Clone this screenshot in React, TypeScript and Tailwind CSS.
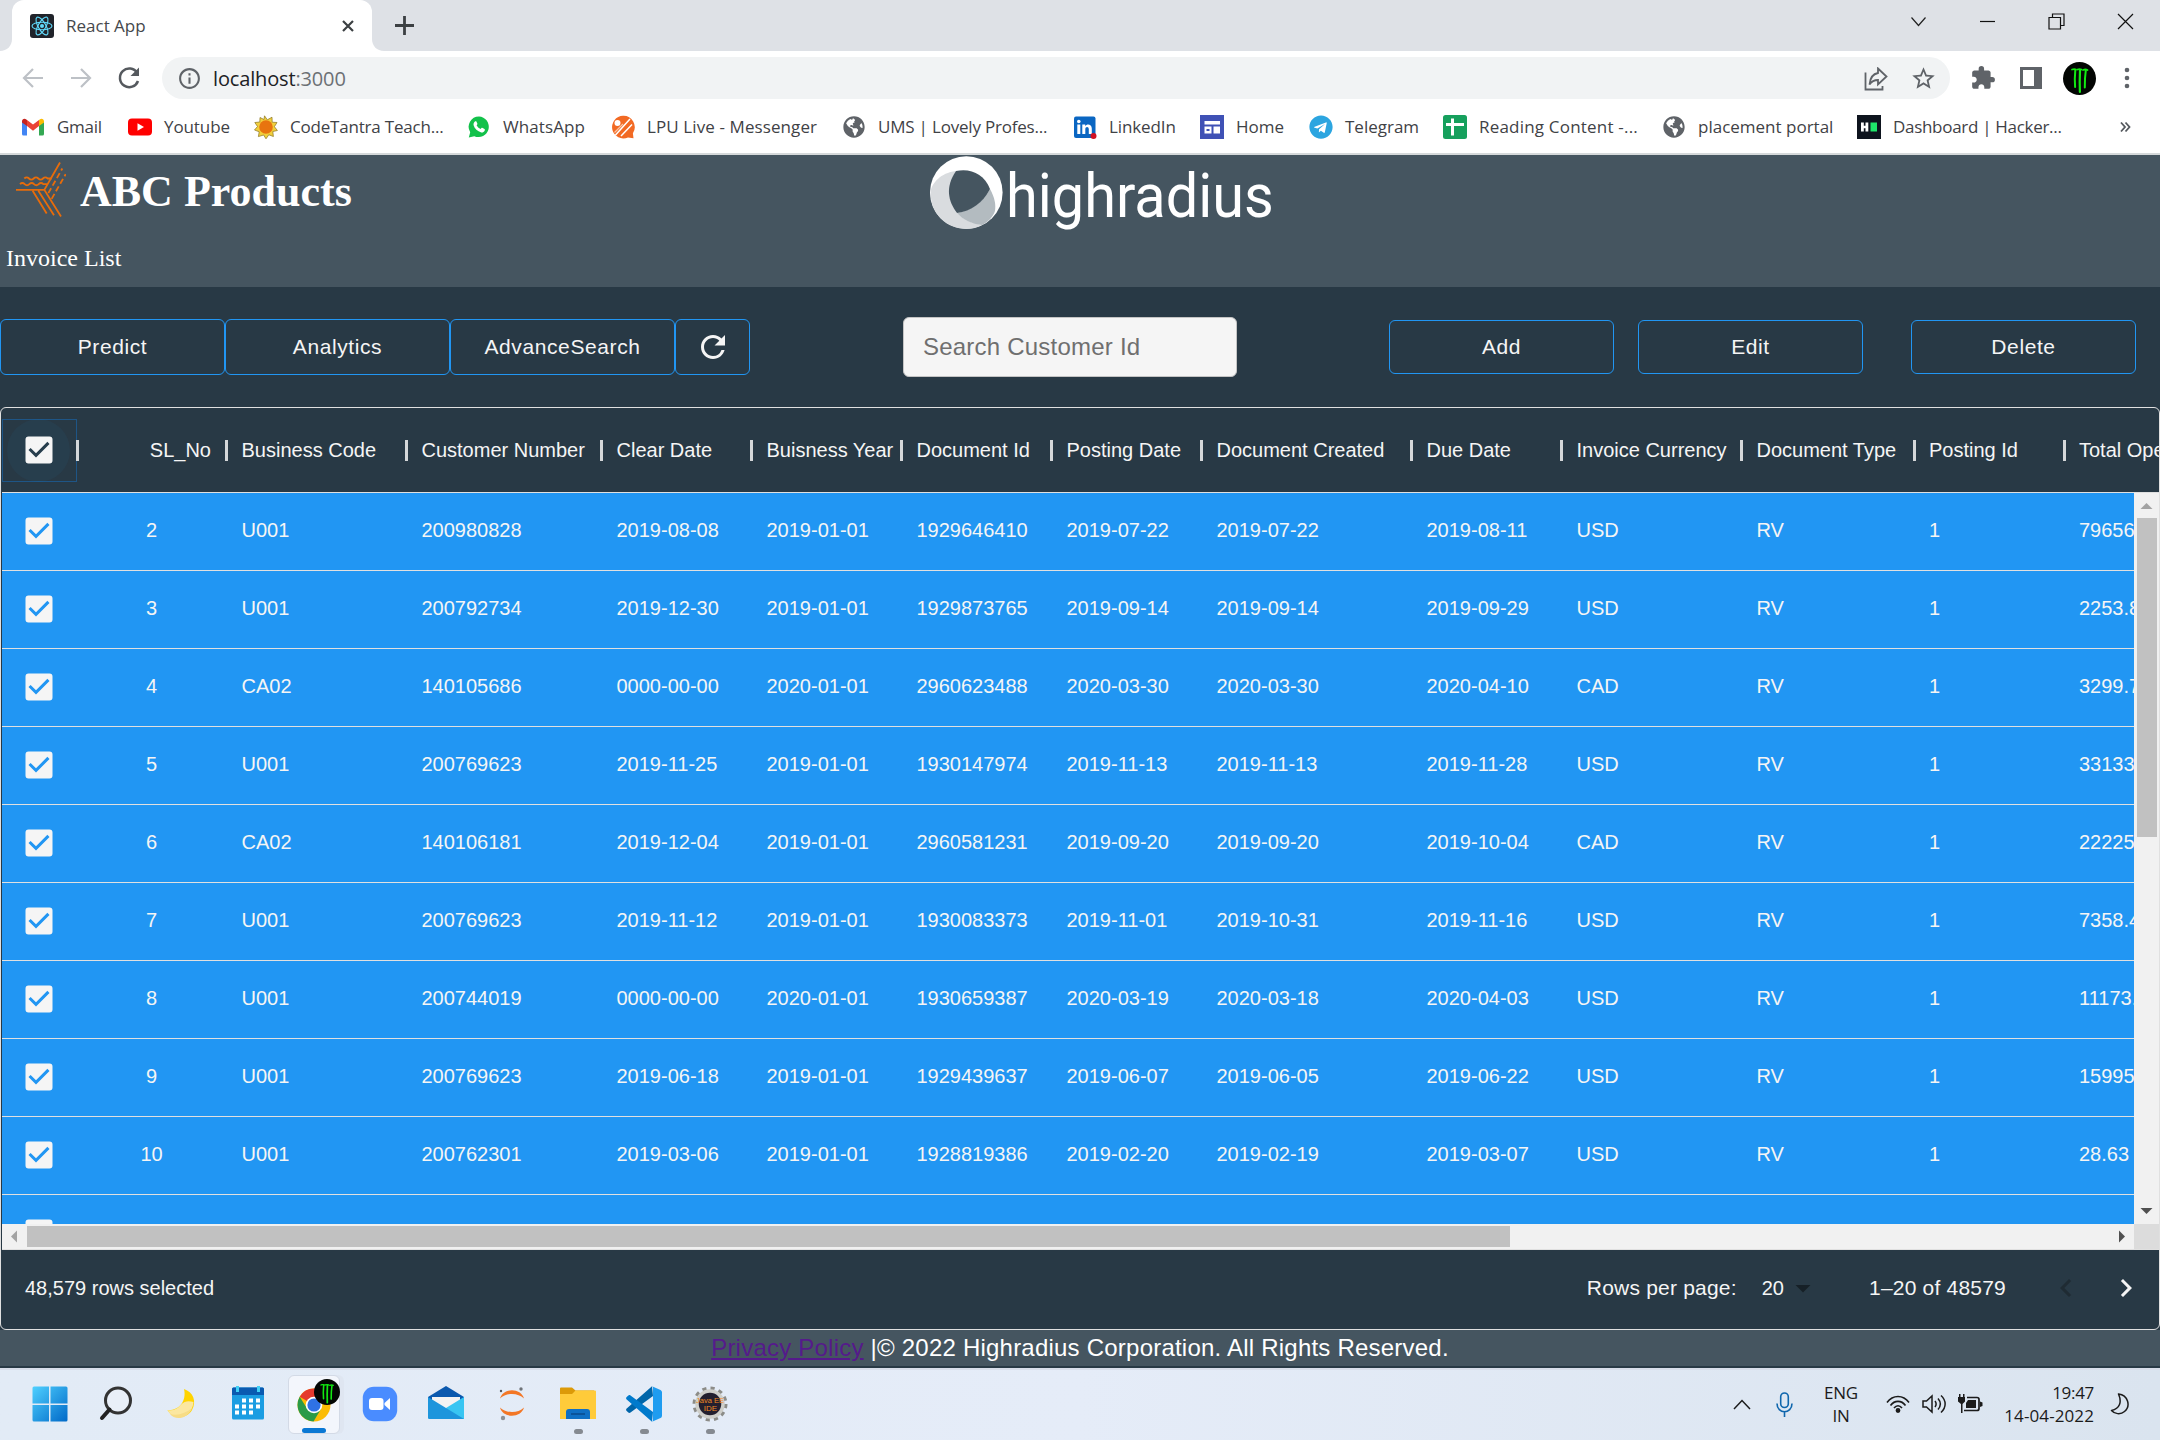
import React from "react";
import {
  MdRefresh,
  MdStarBorder,
  MdExtension,
  MdInfoOutline,
  MdKeyboardArrowLeft,
  MdKeyboardArrowRight,
  MdArrowDropDown,
  MdCheckBox,
} from "react-icons/md";
import { FaGlobeAmericas, FaTelegram } from "react-icons/fa";

const Monster = ({ size }: { size: number }) => (
  <svg width={size} height={size} viewBox="0 0 33 33">
    <circle cx="16.5" cy="16.5" r="16.5" fill="#030603" />
    <g fill="none" stroke="#12e812" strokeLinecap="round">
      <path d="M9 7.500q2.500-.8 4 0" strokeWidth="1.800" />
      <path d="M12.300 8l-.5 9 .3 8" strokeWidth="2" />
      <path d="M14.500 7.500q2-.8 4 0" strokeWidth="1.800" />
      <path d="M17 8l-.3 12 .2 10" strokeWidth="2.200" />
      <path d="M20 8q2.500-1 4.500 0" strokeWidth="1.800" />
      <path d="M22.800 8.500l-.8 8-.2 9" strokeWidth="2" />
    </g>
  </svg>
);

const Gmail = () => (
  <svg width="24" height="24" viewBox="0 0 24 24">
    <path d="M1 6v13a1.500 1.500 0 0 0 1.500 1.500H6V10z" fill="#4285f4" />
    <path d="M23 6v13a1.500 1.500 0 0 1-1.500 1.500H18V10z" fill="#34a853" />
    <path d="M6 10V5l6 4.600L18 5v6l-6 4.800L6 11z" fill="#ea4335" />
    <path d="M1 6.500C1 4 3.500 3 5.300 4.500L6 5v6L1 7.500z" fill="#c5221f" />
    <path d="M23 6.500c0-2.500-2.500-3.500-4.300-2L18 5v6l5-3.500z" fill="#fbbc04" />
  </svg>
);
const Youtube = () => (
  <svg width="24" height="24" viewBox="0 0 24 24">
    <rect y="3.500" width="24" height="17" rx="4" fill="#f00" />
    <path d="M9.500 8.300v7.400l6.500-3.700z" fill="#fff" />
  </svg>
);
const Sun = () => (
  <svg width="24" height="24" viewBox="0 0 24 24">
    <path
      d="M10.500 .8l2.800 4 4.700-2.600.2 5 4.800.3-2.600 4.200 3 3.800-4.600 1 .6 5-4.600-1.700-2.800 4-2.400-3.800-5.200 1.600.8-4.800-4.700-1.800 3-3.500L.8 7.500l5-.5.2-4.500 4 2z"
      fill="#f2cf3c"
      stroke="#8a7420"
      strokeWidth=".7"
    />
    <circle cx="12" cy="12" r="6.800" fill="#e8740f" />
  </svg>
);
const WhatsApp = () => (
  <svg width="24" height="24" viewBox="0 0 24 24">
    <path d="M12 1.500A10.300 10.300 0 0 0 3.200 17.200L1.800 22.600l5.500-1.400A10.300 10.300 0 1 0 12 1.500z" fill="#12c14a" />
    <path
      d="M8.200 6.300c.4-.3 1-.2 1.200.2l1 2.200c.1.300 0 .6-.8 1.600.7 1.500 2.200 3 4 3.700.9-1.100 1.200-1.400 1.600-1.200l2.300 1.100c.5.300.4 1.200 0 2-.5 1-2 1.800-3.200 1.500C10.500 16.500 7.600 13.700 6.600 10.300c-.4-1.500.4-3.200 1.600-4z"
      fill="#fff"
    />
  </svg>
);
const Lpu = () => (
  <svg width="24" height="24" viewBox="0 0 24 24">
    <path d="M12 .8A11.300 11.300 0 1 0 17 22.400l5.500.8-.6-5A11.300 11.300 0 0 0 12 .8z" fill="#f26a24" />
    <path d="M4.500 20L19 4M10 21L21 9.500" stroke="#fff" strokeWidth="1.500" />
    <path d="M3.500 17.500L12 9" stroke="#fbc3a3" strokeWidth="1.200" />
    <circle cx="6.500" cy="8" r="3" fill="#fff" />
  </svg>
);
const Globe = () => <FaGlobeAmericas size={22} color="#5f6368" />;
const LinkedIn = () => (
  <svg width="24" height="24" viewBox="0 0 24 24">
    <rect x="1" y="1.500" width="21.500" height="21.500" rx="2" fill="#0a66c2" />
    <path d="M4.300 9.500h3V19h-3zM9.300 9.500h2.900v1.400c1.400-2.300 6.600-2.400 6.600 2.600V19h-3v-4.800c0-3-3.500-2.800-3.500 0V19h-3z" fill="#fff" />
    <circle cx="5.800" cy="6.500" r="1.800" fill="#fff" />
    <circle cx="20.500" cy="21" r="3" fill="#d11124" />
  </svg>
);
const Home = () => (
  <svg width="24" height="24" viewBox="0 0 24 24">
    <path d="M0 0h24v24H0z" fill="#3f51b5" />
    <path d="M4.500 6h15.500v3.500H4.500zM4.500 11.500h7v7h-7zM13.500 11.500H20v7h-6.500z" fill="#fff" />
    <path d="M6.500 14h3v2h-3z" fill="#3f51b5" />
  </svg>
);
const Telegram = () => <FaTelegram size={24} color="#2ca5e0" />;
const Sheets = () => (
  <svg width="24" height="24" viewBox="0 0 24 24">
    <rect width="24" height="24" rx="2.500" fill="#16a05d" />
    <path d="M8 3.500h3v17H8zM3 8h18v3H3z" fill="#fff" />
  </svg>
);
const Hacker = () => (
  <svg width="24" height="24" viewBox="0 0 24 24">
    <path d="M0 0h24v24H0z" fill="#0e141e" />
    <path d="M4 7.500h2.800v3.200h1.700V7.500h2.800v9H8.500v-3.200H6.800v3.200H4z" fill="#fff" />
    <path d="M13.500 7.500h6.500v9h-6.500z" fill="#1ee66a" />
  </svg>
);

const bookmarks: { label: string; Icon: () => React.ReactElement; box: string }[] = [
  { label: "Gmail", Icon: Gmail, box: "w-[107px] tracking-[-0.3px]" },
  { label: "Youtube", Icon: Youtube, box: "w-[126px] tracking-[-0.1px]" },
  { label: "CodeTantra Teach...", Icon: Sun, box: "w-[213px] tracking-[-0.2px]" },
  { label: "WhatsApp", Icon: WhatsApp, box: "w-[144px] tracking-[0.1px]" },
  { label: "LPU Live - Messenger", Icon: Lpu, box: "w-[231px] tracking-[0.1px]" },
  { label: "UMS | Lovely Profes...", Icon: Globe, box: "w-[231px] tracking-[-0.2px]" },
  { label: "LinkedIn", Icon: LinkedIn, box: "w-[127px] tracking-[-0.1px]" },
  { label: "Home", Icon: Home, box: "w-[109px]" },
  { label: "Telegram", Icon: Telegram, box: "w-[134px]" },
  { label: "Reading Content -...", Icon: Sheets, box: "w-[219px] tracking-[0.2px]" },
  { label: "placement portal", Icon: Globe, box: "w-[195px]" },
  { label: "Dashboard | Hacker...", Icon: Hacker, box: "w-[263px] tracking-[-0.3px]" },
];

function TabStrip() {
  return (
    <div className="flex h-[51px] shrink-0 items-start bg-[#dee1e6]">
      <svg width="12" height="51" viewBox="0 0 12 51">
        <path d="M12 39v12H0c7 0 12-5 12-12z" fill="#fff" />
      </svg>
      <div className="flex h-[51px] w-[360px] items-center rounded-t-xl bg-white pl-[18px]">
        <svg width="24" height="24" viewBox="0 0 24 24">
          <rect width="24" height="24" rx="3" fill="#20232a" />
          <g fill="none" stroke="#61dafb" strokeWidth="1.100">
            <ellipse cx="12" cy="12" rx="10" ry="3.800" />
            <ellipse cx="12" cy="12" rx="10" ry="3.800" transform="rotate(60 12 12)" />
            <ellipse cx="12" cy="12" rx="10" ry="3.800" transform="rotate(120 12 12)" />
          </g>
          <circle cx="12" cy="12" r="2" fill="#61dafb" />
        </svg>
        <span className="ml-[12px] text-[17px] text-[#45484c]">React App</span>
        <svg className="ml-auto mr-[18px]" width="12" height="12" viewBox="0 0 12 12">
          <path d="M1 1l10 10M11 1L1 11" stroke="#3c4043" strokeWidth="2.200" />
        </svg>
      </div>
      <svg width="12" height="51" viewBox="0 0 12 51">
        <path d="M0 39v12h12C5 51 0 46 0 39z" fill="#fff" />
      </svg>
      <svg className="ml-[11px] mt-[16px]" width="19" height="19" viewBox="0 0 19 19">
        <path d="M9.500 0v19M0 9.500h19" stroke="#3c4043" strokeWidth="2.800" />
      </svg>
      <div className="ml-auto mr-[26px] mt-[13px] flex items-center gap-[52px]">
        <svg width="17" height="17" viewBox="0 0 17 17">
          <path d="M1.500 4.500l7 8 7-8" fill="none" stroke="#222" strokeWidth="1.200" />
        </svg>
        <svg width="17" height="17" viewBox="0 0 17 17">
          <path d="M1 8.500h15" stroke="#111" strokeWidth="1.200" />
        </svg>
        <svg width="17" height="17" viewBox="0 0 17 17">
          <path d="M1 4.500h11.500V16H1zM4.500 4.500V1H16v11.500h-3.500" fill="none" stroke="#111" strokeWidth="1.200" />
        </svg>
        <svg width="17" height="17" viewBox="0 0 17 17">
          <path d="M1 1l15 15M16 1L1 16" stroke="#111" strokeWidth="1.200" />
        </svg>
      </div>
    </div>
  );
}

function Toolbar() {
  return (
    <div className="flex h-[54px] shrink-0 items-center bg-white pl-[22px] pr-[22px]">
      <svg width="22" height="22" viewBox="0 0 22 22">
        <path d="M21 11H2.500M11 2L2 11l9 9" fill="none" stroke="#bdc1c6" strokeWidth="2.200" />
      </svg>
      <svg className="ml-[26px]" width="22" height="22" viewBox="0 0 22 22">
        <path d="M1 11h18.500M11 2l9 9-9 9" fill="none" stroke="#bdc1c6" strokeWidth="2.200" />
      </svg>
      <svg className="ml-[25px]" width="24" height="24" viewBox="0 0 24 24">
        <path d="M20.200 7A9.300 9.300 0 1 0 21 15" fill="none" stroke="#55595e" strokeWidth="2.500" />
        <path d="M22 1.500V10h-8.500z" fill="#55595e" />
      </svg>
      <div className="ml-[21px] flex h-[42px] w-[1788px] items-center rounded-full bg-[#f1f3f4] pl-[15px] pr-[13px]">
        <MdInfoOutline size={25} color="#5f6368" />
        <span className="ml-[11px] mt-[2px] text-[20px] tracking-[-0.15px] text-[#202124]">
          localhost<span className="text-[#6c7075]">:3000</span>
        </span>
        <svg className="ml-auto mt-[1px]" width="24" height="24" viewBox="0 0 24 24" fill="none" stroke="#5f6368" strokeWidth="1.800">
          <path d="M1.500 5.500v17h17v-3.500" />
          <path d="M14 1.500l8.500 8-8.500 8v-4.500c-4 0-6.500 1.500-8.500 4.500.5-6 3-10.500 8.500-11.500z" />
        </svg>
        <MdStarBorder className="ml-[22px]" size={27} color="#5f6368" />
      </div>
      <MdExtension className="ml-[20px]" size={26} color="#5f6368" />
      <svg className="ml-[24px]" width="22" height="22" viewBox="0 0 22 22">
        <path d="M0 0h22v22H0zM3 3v16h11V3z" fill="#5f6368" fillRule="evenodd" />
      </svg>
      <div className="ml-[21px]">
        <Monster size={33} />
      </div>
      <svg className="ml-[28px]" width="6" height="22" viewBox="0 0 6 22" fill="#5f6368">
        <circle cx="3" cy="3" r="2.300" />
        <circle cx="3" cy="11" r="2.300" />
        <circle cx="3" cy="19" r="2.300" />
      </svg>
    </div>
  );
}

function BookmarksBar() {
  return (
    <div className="flex h-[50px] shrink-0 items-center border-b-2 border-[#d5d9da] bg-white pb-[5px] pl-[21px] text-[17px] leading-6 text-[#3f4246]">
      {bookmarks.map(({ label, Icon, box }) => (
        <div key={label} className={`flex shrink-0 items-center whitespace-nowrap ${box}`}>
          <span className="mr-[12px] flex w-[24px] shrink-0 justify-center">
            <Icon />
          </span>
          {label}
        </div>
      ))}
      <svg width="11" height="12" viewBox="0 0 11 12" fill="none" stroke="#55595e" strokeWidth="1.800">
        <path d="M1 1.500L5 6l-4 4.500M5.500 1.500l4 4.500-4 4.500" />
      </svg>
    </div>
  );
}

function AppHeader() {
  return (
    <header className="flex h-[132px] shrink-0 bg-[#455560] text-white">
      <div className="w-[930px]">
        <div className="flex h-[74px] items-center pl-[16px]">
          <svg className="-mt-[6px]" width="50" height="55" viewBox="48 184 150 164" fill="none" stroke="#e86c0a" strokeWidth="5.500">
            <path d="M48 267h85l50 80M133 267l47-82M115 270l47 73M98 270l42 68" />
            <path d="M60 250q7-7 14 0t14 0 14 0 14 0 14 0h12M73 233q7-7 14 0t14 0 14 0 14 0 14 0h12" />
            <path d="M145 277l42-74M155 294l42-74" strokeDasharray="17 9" />
          </svg>
          <span className="ml-[14px] font-['Liberation_Serif',serif] text-[44px] font-bold leading-[50px]">ABC Products</span>
        </div>
        <div className="mt-[15px] pl-[6px] font-['Liberation_Serif',serif] text-[24px] leading-7">Invoice List</div>
      </div>
      <svg width="73" height="75" viewBox="0 0 73 75">
        <circle cx="36.300" cy="37.500" r="36.300" fill="#fff" />
        <path d="M26 16C10 18 3 28 .8 35C-1 58 16 74 36.500 74c6 0 11-1.500 15.500-4-10-2-19-5-25-12-6-8-10-24-1-42z" fill="#d9dcdf" />
        <path d="M60 34c5 9 6 16 5 22-2 6-7 11-13 14-10-1-19-5-25-12 14-3 26-10 33-24z" fill="#b3bbc0" />
        <path d="M26 16c15-3 28 3 34 18-7 14-19 22-33 24-9-12-12-26-1-42z" fill="#455560" />
      </svg>
      <span className="ml-[3px] mt-[5px] inline-block h-[72px] origin-left scale-x-[0.93] font-['Roboto',sans-serif] text-[62px] font-normal leading-[72px]">
        highradius
      </span>
    </header>
  );
}

const btn = "flex items-center justify-center border border-[#2196f3] rounded-md text-[21px] tracking-[0.6px] text-[#f5f5f5]";

function Actions() {
  return (
    <div className="flex h-[120px] shrink-0 items-center font-['Liberation_Sans',Arial,sans-serif]">
      <button className={`${btn} h-[56px] w-[225px]`}>Predict</button>
      <button className={`${btn} h-[56px] w-[225px]`}>Analytics</button>
      <button className={`${btn} h-[56px] w-[225px]`}>AdvanceSearch</button>
      <button className={`${btn} h-[56px] w-[75px]`}>
        <MdRefresh size={36} />
      </button>
      <div className="ml-[153px] flex h-[60px] w-[334px] items-center rounded-md border border-[#c4c4c4] bg-[#f5f5f5] pl-[19px] text-[24px] tracking-[0.22px] text-[#6f6f6f]">
        Search Customer Id
      </div>
      <button className={`${btn} ml-[152px] h-[54px] w-[225px]`}>Add</button>
      <button className={`${btn} ml-[24px] h-[54px] w-[225px]`}>Edit</button>
      <button className={`${btn} ml-[48px] h-[54px] w-[225px]`}>Delete</button>
    </div>
  );
}

const columns: { title: string; width: string }[] = [
  { title: "SL_No", width: "w-[150px]" },
  { title: "Business Code", width: "w-[180px]" },
  { title: "Customer Number", width: "w-[195px]" },
  { title: "Clear Date", width: "w-[150px]" },
  { title: "Buisness Year", width: "w-[150px]" },
  { title: "Document Id", width: "w-[150px]" },
  { title: "Posting Date", width: "w-[150px]" },
  { title: "Document Created", width: "w-[210px]" },
  { title: "Due Date", width: "w-[150px]" },
  { title: "Invoice Currency", width: "w-[180px]" },
  { title: "Document Type", width: "w-[172.5px]" },
  { title: "Posting Id", width: "w-[150px]" },
  { title: "Total Open Amount", width: "w-[200px]" },
];

const rows: string[][] = [
  ["2", "U001", "200980828", "2019-08-08", "2019-01-01", "1929646410", "2019-07-22", "2019-07-22", "2019-08-11", "USD", "RV", "1", "79656.6"],
  ["3", "U001", "200792734", "2019-12-30", "2019-01-01", "1929873765", "2019-09-14", "2019-09-14", "2019-09-29", "USD", "RV", "1", "2253.86"],
  ["4", "CA02", "140105686", "0000-00-00", "2020-01-01", "2960623488", "2020-03-30", "2020-03-30", "2020-04-10", "CAD", "RV", "1", "3299.7"],
  ["5", "U001", "200769623", "2019-11-25", "2019-01-01", "1930147974", "2019-11-13", "2019-11-13", "2019-11-28", "USD", "RV", "1", "33133.29"],
  ["6", "CA02", "140106181", "2019-12-04", "2019-01-01", "2960581231", "2019-09-20", "2019-09-20", "2019-10-04", "CAD", "RV", "1", "22225.84"],
  ["7", "U001", "200769623", "2019-11-12", "2019-01-01", "1930083373", "2019-11-01", "2019-10-31", "2019-11-16", "USD", "RV", "1", "7358.49"],
  ["8", "U001", "200744019", "0000-00-00", "2020-01-01", "1930659387", "2020-03-19", "2020-03-18", "2020-04-03", "USD", "RV", "1", "11173.02"],
  ["9", "U001", "200769623", "2019-06-18", "2019-01-01", "1929439637", "2019-06-07", "2019-06-05", "2019-06-22", "USD", "RV", "1", "15995.04"],
  ["10", "U001", "200762301", "2019-03-06", "2019-01-01", "1928819386", "2019-02-20", "2019-02-19", "2019-03-07", "USD", "RV", "1", "28.63"],
  ["", "", "", "", "", "", "", "", "", "", "", "", ""],
];

function Grid() {
  return (
    <div className="flex h-[923px] shrink-0 flex-col overflow-hidden rounded-md border border-[#e0e0e0] font-['Liberation_Sans',Arial,sans-serif] text-[20px] text-[#f5f5f5]">
      <div className="ml-px flex h-[85px] shrink-0 items-center overflow-hidden border-b border-[#e0e0e0]">
        <div className="flex h-[63px] w-[75px] shrink-0 items-center justify-center border border-[#1e5586] pr-[2px]">
          <div className="flex size-[63px] shrink-0 items-center justify-center rounded-full bg-[#2196f3]/5">
            <MdCheckBox size={36} />
          </div>
        </div>
        <div className="-ml-[1.5px] -mr-[1.5px] h-[21px] w-[3px] shrink-0 bg-[#d4d7d9]" />
        {columns.map((c, i) => (
          <div key={c.title} className={`flex shrink-0 items-center whitespace-nowrap pl-[14.5px] ${c.width}`}>
            <span className={i === 0 ? "-mt-[1px] ml-auto mr-[14px]" : "-mt-[1px] mr-auto"}>{c.title}</span>
            <div className="-mr-[1px] h-[21px] w-[3px] shrink-0 bg-[#d4d7d9]" />
          </div>
        ))}
      </div>
      <div className="ml-px flex h-[731px] shrink-0">
        <div className="w-[2132px] shrink-0 overflow-hidden bg-[#2196f3]">
          {rows.map((r, i) => (
            <div key={i} className="flex h-[78px] w-[2400px] items-center border-b border-[#e0e0e0]">
              <div className="-mt-[1px] flex w-[75px] shrink-0 justify-center pr-[2px]">
                <MdCheckBox size={36} />
              </div>
              {r.map((v, j) => (
                <div
                  key={j}
                  className={`-mt-[4px] shrink-0 whitespace-nowrap ${columns[j].width} ${j === 0 ? "pr-px text-center" : "pl-[14.5px]"}`}
                >
                  {v}
                </div>
              ))}
            </div>
          ))}
        </div>
        <div className="flex w-[25px] flex-col items-center bg-[#f1f1f1]">
          <svg className="shrink-0" width="25" height="25" viewBox="0 0 25 25">
            <path d="M6.500 16l6-6 6 6z" fill="#a3a3a3" />
          </svg>
          <div className="h-[319px] w-[20px] bg-[#c1c1c1]" />
          <svg className="mt-auto shrink-0" width="25" height="25" viewBox="0 0 25 25">
            <path d="M6.500 9l6 6 6-6z" fill="#505050" />
          </svg>
        </div>
      </div>
      <div className="ml-px flex h-[26px] shrink-0 items-center border-b border-[#e0e0e0] bg-[#f1f1f1]">
        <svg width="25" height="25" viewBox="0 0 25 25">
          <path d="M15 6.500l-6 6 6 6z" fill="#a3a3a3" />
        </svg>
        <div className="h-[21px] w-[1483px] bg-[#c1c1c1]" />
        <svg className="ml-auto" width="25" height="25" viewBox="0 0 25 25">
          <path d="M10 6.500l6 6-6 6z" fill="#505050" />
        </svg>
        <div className="h-full w-[25px] bg-[#dcdcdc]" />
      </div>
      <div className="flex flex-1 items-center pb-[3px] pl-[24px]">
        <span>48,579 rows selected</span>
        <div className="ml-auto flex items-center text-[21px] tracking-[0.2px]">
          <span>Rows per page:</span>
          <span className="ml-[25px] text-[20px] tracking-normal">20</span>
          <MdArrowDropDown className="ml-px" size={36} color="#162027" />
          <span className="ml-[48px] w-[138px] whitespace-nowrap">1–20 of 48579</span>
          <MdKeyboardArrowLeft className="ml-[41px]" size={36} color="#1f2b33" />
          <MdKeyboardArrowRight className="ml-[24px] mr-[15px]" size={36} />
        </div>
      </div>
    </div>
  );
}

function SiteFooter() {
  return (
    <div className="flex h-[38px] shrink-0 justify-center border-b-2 border-[#283945] bg-[#455560] font-['Liberation_Sans',Arial,sans-serif] text-[24px] leading-[35px] tracking-[0.22px] text-white">
      <p className="whitespace-pre">
        <a className="text-[#551a8b] underline">Privacy Policy</a> |© 2022 Highradius Corporation. All Rights Reserved.
      </p>
    </div>
  );
}

const appIcons: { name: string; running?: boolean; active?: boolean; art: React.ReactElement }[] = [
  {
    name: "start",
    art: (
      <svg width="36" height="36" viewBox="0 0 36 36">
        <defs>
          <linearGradient id="win" x1="0" y1="0" x2="1" y2="1">
            <stop offset="0" stopColor="#4fd0ff" />
            <stop offset="1" stopColor="#0069c8" />
          </linearGradient>
        </defs>
        <path d="M2 .5h15v17H.5V2A1.500 1.500 0 0 1 2 .5zM18.500.5H34A1.500 1.500 0 0 1 35.500 2v15.500h-17zM.5 19H17v16.500H2A1.500 1.500 0 0 1 .5 34zM18.500 19h17v15a1.500 1.500 0 0 1-1.500 1.500H18.500z" fill="url(#win)" />
      </svg>
    ),
  },
  {
    name: "search",
    art: (
      <svg width="36" height="36" viewBox="0 0 36 36">
        <circle cx="20" cy="14.500" r="12.500" fill="#e9eff8" stroke="#333" strokeWidth="3" />
        <path d="M11.500 23.500L4 32" stroke="#222" strokeWidth="4" strokeLinecap="round" />
      </svg>
    ),
  },
  {
    name: "weather",
    art: (
      <svg width="36" height="36" viewBox="0 0 36 36">
        <path d="M20 3c9 3 13 12 8 21C23 33 9 34 3.500 24 14 25 23 16 20 3z" fill="#ffd400" />
        <path d="M3.500 24c6 1 10-1 13-5 5-5 9-4 13-3-1 15-19 21-26 8z" fill="#fbe7a0" />
        <path d="M6 28c8 2 16-1 22-6-4 11-17 13-22 6z" fill="#f7dc86" />
      </svg>
    ),
  },
  {
    name: "calendar",
    art: (
      <svg width="36" height="36" viewBox="0 0 36 36">
        <rect x="2" y="1.500" width="32" height="32" rx="1.500" fill="#1b9de2" />
        <path d="M2 3a1.500 1.500 0 0 1 1.500-1.500h29A1.500 1.500 0 0 1 34 3v6H2z" fill="#0a5ab0" />
        <path d="M6 0h3v6H6zM27 0h3v6h-3z" fill="#3fd0f6" />
        <path d="M12 12.500h4v4h-4zM19 12.500h4v4h-4zM26 12.500h4v4h-4zM5 18.500h4v4H5zM12 18.500h4v4h-4zM19 18.500h4v4h-4zM26 18.500h4v4h-4zM5 24.500h4v4H5zM12 24.500h4v4h-4zM19 24.500h4v4h-4z" fill="#fff" />
      </svg>
    ),
  },
  {
    name: "chrome",
    active: true,
    art: (
      <div className="relative">
        <svg width="34" height="34" viewBox="0 0 34 34">
          <circle cx="17" cy="17" r="16.500" fill="#fbbc05" />
          <path d="M17 17L2.700 8.800A16.500 16.500 0 0 1 31.300 8.800H17z" fill="#e53a2e" />
          <path d="M17 17l7 4-7.500 12.500A16.500 16.500 0 0 1 2.700 8.800l7.500 12z" fill="#2a9a48" />
          <circle cx="17" cy="17" r="8.300" fill="#fff" />
          <circle cx="17" cy="17" r="6.600" fill="#2f72e4" />
        </svg>
        <div className="absolute -top-[9px] left-[17px]">
          <Monster size={26} />
        </div>
      </div>
    ),
  },
  {
    name: "zoom",
    art: (
      <svg width="36" height="36" viewBox="0 0 36 36">
        <rect x=".8" y=".8" width="34.400" height="34.400" rx="11" fill="#4a8cff" />
        <rect x="7" y="12" width="14.500" height="12" rx="3" fill="#fff" />
        <path d="M22.500 17l5.500-5v12l-5.500-5z" fill="#fff" />
      </svg>
    ),
  },
  {
    name: "mail",
    art: (
      <svg width="36" height="36" viewBox="0 0 36 36">
        <path d="M0 11L18 0l18 11v3H0z" fill="#0b59ae" />
        <path d="M4 11h28v4L18 23 4 15z" fill="#f3f3f3" />
        <path d="M36 11v22H0l18-11z" fill="#38c5f2" />
        <path d="M0 11l36 22H1.500A1.500 1.500 0 0 1 0 31.500z" fill="#1d95dc" />
      </svg>
    ),
  },
  {
    name: "jupyter",
    art: (
      <svg width="36" height="36" viewBox="0 0 36 36">
        <path d="M6 12.500C9 1.500 27 1.500 30 12.500 24 6.500 12 6.500 6 12.500zM6 21.500c3 11 21 11 24 0-6 6-18 6-24 0z" fill="#f37726" />
        <circle cx="27" cy="3" r="1.700" fill="#6f7378" />
        <circle cx="7" cy="5" r="1.200" fill="#55585c" />
        <circle cx="9" cy="32" r="2.200" fill="#8d9196" />
      </svg>
    ),
  },
  {
    name: "explorer",
    running: true,
    art: (
      <svg width="36" height="36" viewBox="0 0 36 36">
        <path d="M0 2.500A1 1 0 0 1 1 1.500h11l3.500 3H34V12H0z" fill="#dc9a08" />
        <path d="M0 8h12l3.500-3.500H35a1 1 0 0 1 1 1V33H0z" fill="#ffcb3a" />
        <path d="M6 33v-7a3 3 0 0 1 3-3h18a3 3 0 0 1 3 3v7z" fill="#0f6fc4" />
        <path d="M11 28h14" stroke="#0a4a8c" strokeWidth="1.500" />
      </svg>
    ),
  },
  {
    name: "vscode",
    running: true,
    art: (
      <svg width="36" height="36" viewBox="0 0 36 36">
        <path d="M27 10L4.500 26.500c-.8.6-1.500.5-2.200-.1L.7 25c-.8-.8-.8-1.700 0-2.500L26 .3z" fill="#0065a9" />
        <path d="M27 26L4.500 9.500c-.8-.6-1.500-.5-2.200.1L.7 11c-.8.8-.8 1.700 0 2.500L26 35.700z" fill="#007acc" />
        <path d="M26 .3L34.500 4A2.500 2.500 0 0 1 36 6.300v23.400a2.500 2.500 0 0 1-1.500 2.300L26 35.700c.7-.3 1-.9 1-1.700V2c0-.8-.3-1.400-1-1.700z" fill="#1f9cf0" />
      </svg>
    ),
  },
  {
    name: "eclipse",
    running: true,
    art: (
      <svg width="36" height="36" viewBox="0 0 36 36">
        <circle cx="18" cy="18" r="15.500" fill="none" stroke="#8c8c88" strokeWidth="4" strokeDasharray="4.060 4.060" />
        <circle cx="18" cy="18" r="13" fill="#231f2e" stroke="#cfcfca" strokeWidth="3.500" />
        <g fill="#f08a24" fontFamily="Liberation Sans, sans-serif" fontSize="8" textAnchor="middle">
          <text x="18" y="16.500" textLength="28" lengthAdjust="spacingAndGlyphs">
            Java EE
          </text>
          <text x="18.500" y="24.500">IDE</text>
        </g>
      </svg>
    ),
  },
];

function Taskbar() {
  return (
    <div className="flex h-[72px] shrink-0 items-center border-t-2 border-[#d8deea] bg-linear-to-r from-[#e2ebf6] via-[#e5ecf8] to-[#dae4ef] pl-[17px] pr-[31px] text-[17px] text-[#1b1b1b]">
      {appIcons.map((a) => (
        <div key={a.name} className="flex h-[60px] w-[66px] shrink-0 justify-center">
          <div
            className={`flex flex-col items-center pt-[11px] ${
              a.active ? "h-[59px] w-[52px] rounded-md border border-[#d3dae6] bg-[#f3f6fc] shadow-[4px_0_0_0_#dfe6f1]" : ""
            }`}
          >
            <div className="flex h-[36px] items-center">{a.art}</div>
            {a.active && <div className="mt-[6px] h-[5px] w-[24px] shrink-0 rounded-full bg-[#0a78d4]" />}
            {a.running && <div className="mt-[7px] h-[5px] w-[9px] shrink-0 rounded-full bg-[#858a91]" />}
          </div>
        </div>
      ))}
      <div className="-mt-[2px] ml-auto flex items-center">
        <svg width="18" height="11" viewBox="0 0 18 11">
          <path d="M1 10l8-8.500 8 8.500" fill="none" stroke="#1b1b1b" strokeWidth="1.500" />
        </svg>
        <svg className="ml-[25px]" width="17" height="25" viewBox="0 0 17 25" fill="none" stroke="#0f66ad" strokeWidth="1.600">
          <rect x="4.700" y="1" width="7.600" height="14.500" rx="3.800" />
          <path d="M1 11.500c0 11 15 11 15 0M8.500 20v5" />
        </svg>
        <div className="ml-[29px] flex w-[38px] flex-col items-center leading-[23px] tracking-[-0.2px]">
          <span>ENG</span>
          <span>IN</span>
        </div>
        <svg className="ml-[26px]" width="24" height="18" viewBox="0 0 24 18" fill="none" stroke="#1b1b1b" strokeWidth="1.600">
          <path d="M1 7.500c6-8 16-8 22 0M4.500 10.500c4-5.500 11-5.500 15 0M8 13c2.500-3 5.500-3 8 0" />
          <circle cx="12" cy="15.500" r="1.600" fill="#1b1b1b" />
        </svg>
        <svg className="ml-[12px]" width="25" height="20" viewBox="0 0 25 20" fill="none" stroke="#1b1b1b" strokeWidth="1.500">
          <path d="M1 7h3.500L10 2v16l-5.500-5H1zM13 7c1.500 2 1.500 4 0 6M16 4.500c3 3.500 3 7.500 0 11M19 1.500c5.500 5 5.500 12 0 17" />
        </svg>
        <svg className="ml-[11px]" width="25" height="20" viewBox="0 0 25 20">
          <path d="M9 3.500h10a2 2 0 0 1 2 2v9a2 2 0 0 1-2 2H6" fill="none" stroke="#1b1b1b" strokeWidth="1.700" />
          <path d="M10 6h8v8H8V9zM22 7.500l2.500 1v3.500l-2.500 1zM0 3h7v4.500L4.500 10v9H3v-9L0 7.500zM1 0h1.500v3H1zM5 0h1.500v3H5z" fill="#1b1b1b" />
        </svg>
        <div className="ml-[14px] flex w-[97px] flex-col items-end whitespace-nowrap leading-[23px] tracking-[0.1px]">
          <span className="tracking-[-0.3px]">19:47</span>
          <span>14-04-2022</span>
        </div>
        <svg className="ml-[16px]" width="19" height="22" viewBox="0 0 19 22">
          <path d="M8.500 1C18 2 21 13 14.500 18.500c-4 3.500-10 2.500-13-1C10 15.500 12 9 8.500 1z" fill="none" stroke="#1b1b1b" strokeWidth="1.500" strokeLinejoin="round" />
        </svg>
      </div>
    </div>
  );
}

export default function App() {
  return (
    <div className="flex h-[1440px] w-[2160px] flex-col overflow-hidden bg-[#283945] font-['Open_Sans',sans-serif]">
      <TabStrip />
      <Toolbar />
      <BookmarksBar />
      <AppHeader />
      <Actions />
      <Grid />
      <SiteFooter />
      <Taskbar />
    </div>
  );
}
